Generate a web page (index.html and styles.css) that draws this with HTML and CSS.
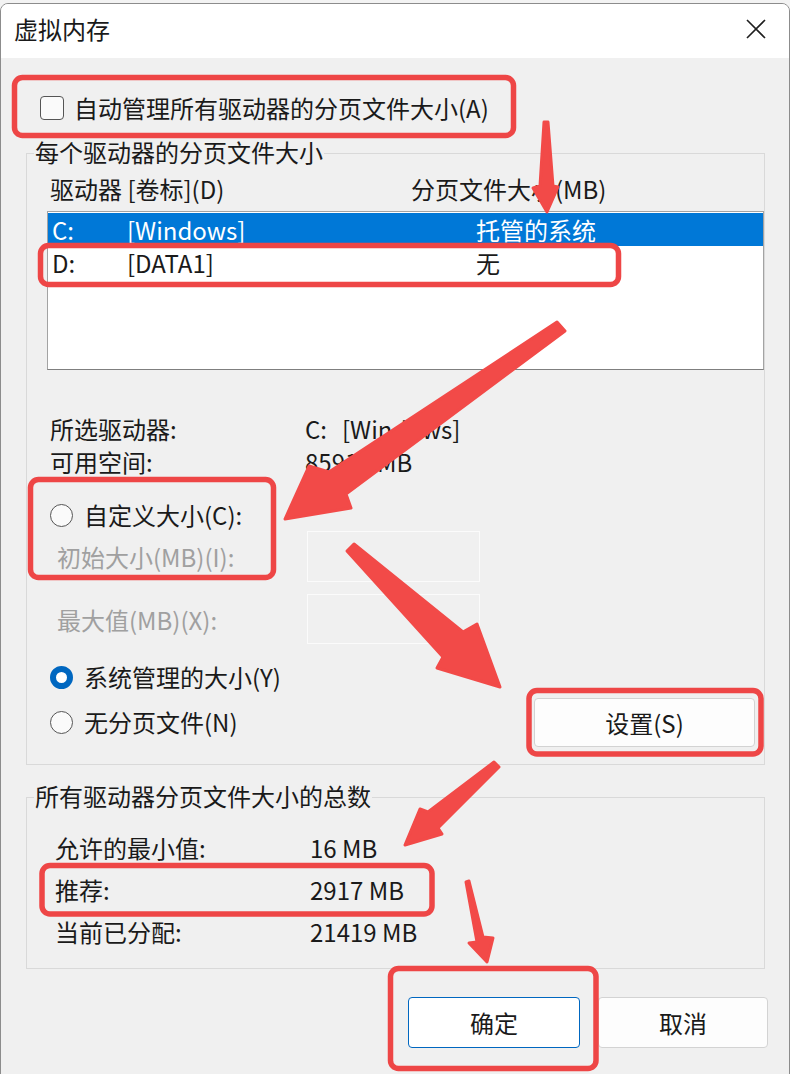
FILE: index.html
```html
<!DOCTYPE html>
<html lang="zh-CN">
<head>
    <meta charset="UTF-8">
    <meta name="viewport" content="width=device-width, initial-scale=1.0">
    <title>虚拟内存</title>
    <link rel="stylesheet" href="styles.css">
</head>
<body>
    <div class="window">
        <div class="titlebar">
            <span class="title">虚拟内存</span>
            <svg class="close" width="20" height="20" viewBox="0 0 20 20">
                <path d="M1 1 L19 19 M19 1 L1 19" stroke="#1f1f1f" stroke-width="1.6" fill="none"/>
            </svg>
        </div>

        <div class="content">
            <label class="check-row">
                <span class="checkbox"></span>
                <span>自动管理所有驱动器的分页文件大小(A)</span>
            </label>

            <!-- 每个驱动器 -->
            <div class="group group-drives">
                <div class="group-title">每个驱动器的分页文件大小</div>
                <div class="list-header">
                    <span>驱动器 [卷标](D)</span>
                    <span>分页文件大小(MB)</span>
                </div>
                <div class="listbox">
                    <div class="list-row selected">
                        <span>C:</span><span>[Windows]</span><span>托管的系统</span>
                    </div>
                    <div class="list-row">
                        <span>D:</span><span>[DATA1]</span><span>无</span>
                    </div>
                </div>

                <div class="info-rows">
                    <div class="info-row"><span>所选驱动器:</span><span><span class="drive-letter">C:</span>[Windows]</span></div>
                    <div class="info-row"><span>可用空间:</span><span>85916 MB</span></div>
                </div>

                <div class="radio-row custom-row">
                    <span class="radio"></span>
                    <span>自定义大小(C):</span>
                </div>
                <div class="size-row">
                    <span class="size-label">初始大小(MB)(I):</span>
                    <input class="size-input" type="text" disabled>
                </div>
                <div class="size-row size-max">
                    <span class="size-label">最大值(MB)(X):</span>
                    <input class="size-input" type="text" disabled>
                </div>

                <div class="radio-row system-row">
                    <span class="radio checked"></span>
                    <span>系统管理的大小(Y)</span>
                </div>
                <div class="nopage-row">
                    <div class="radio-row">
                        <span class="radio"></span>
                        <span>无分页文件(N)</span>
                    </div>
                    <button class="btn btn-set">设置(S)</button>
                </div>
            </div>

            <!-- 总数 -->
            <div class="group group-total">
                <div class="group-title">所有驱动器分页文件大小的总数</div>
                <div class="total-rows">
                    <div class="total-row"><span>允许的最小值:</span><span>16 MB</span></div>
                    <div class="total-row"><span>推荐:</span><span>2917 MB</span></div>
                    <div class="total-row"><span>当前已分配:</span><span>21419 MB</span></div>
                </div>
            </div>

            <div class="actions">
                <button class="btn btn-ok">确定</button>
                <button class="btn btn-cancel">取消</button>
            </div>
        </div>
    </div>

    <!-- red annotations -->
    <svg class="marks" width="790" height="1074" viewBox="0 0 790 1074">
        <g fill="none" stroke="#ee4646" stroke-width="5.5">
            <rect x="14.5" y="77.5" width="499" height="58" rx="8"/>
            <rect x="40.5" y="245.5" width="578" height="39" rx="8"/>
            <rect x="30.5" y="479.5" width="243" height="98" rx="8"/>
            <rect x="529" y="690.5" width="232" height="63.5" rx="8"/>
            <rect x="42" y="865.5" width="390" height="48.5" rx="8"/>
            <rect x="390.5" y="968.5" width="205.5" height="100" rx="8"/>
        </g>
        <g fill="#f24a48" stroke="#f24a48" stroke-width="3" stroke-linejoin="round">
            <polygon points="544,122 548,122 553,186 558,187 547,212 533,188 540,186"/>
            <polygon points="557,322 565,331 346,494 351,508 285,519 309,466 329,472"/>
            <polygon points="347,551 354,544 463,632 477,624 500,687 437,668 443,657"/>
            <polygon points="494,762 499,767 438,828 442,834 405,845 420,809 428,812"/>
            <polygon points="466,882 469,881 483,937 493,938 487,962 469,943 477,942"/>
        </g>
    </svg>
</body>
</html>
```

FILE: styles.css
```css
body {
    margin: 0;
    padding-top: 3px;
    position: relative;
    width: 790px;
    height: 1071px;
    overflow: hidden;
    background-color: #f3f3f3;
    font-family: "Noto Sans CJK SC", "Noto Sans", sans-serif;
    font-size: 24px;
    color: #1a1a1a;
}

.window {
    box-sizing: border-box;
    width: 790px;
    height: 1076px;
    border: 1px solid #8c8c8c;
    border-radius: 8px 8px 0 0;
    background-color: #f0f0f0;
    overflow: hidden;
}

.titlebar {
    height: 54px;
    display: flex;
    align-items: center;
    justify-content: space-between;
    padding: 0 23px 0 13px;
    background-color: #fff;
}

.title {
    line-height: 50px;
    padding-bottom: 4px;
}

.close {
    margin-bottom: 4px;
}

.content {
    padding: 34px 24px 0 25px;
}

.check-row {
    display: flex;
    align-items: center;
    gap: 10px;
    height: 32px;
    margin-left: 14px;
    line-height: 32px;
}

.checkbox {
    box-sizing: border-box;
    width: 24px;
    height: 24px;
    border: 1.5px solid #555;
    border-radius: 4px;
    background-color: #fafafa;
}

/* group boxes */
.group {
    border: 1px solid #d9d9d9;
    padding: 0 0 0 20px;
}

.group-drives {
    margin-top: 29px;
    padding-bottom: 17px;
}

.group-total {
    margin-top: 32px;
    padding-bottom: 15px;
}

.group-title {
    width: fit-content;
    margin: -18px 0 0 -13px;
    padding: 0 1px;
    line-height: 32px;
    background-color: #f0f0f0;
}

.list-header {
    display: grid;
    grid-template-columns: 361px 1fr;
    margin-top: 5px;
    padding-left: 3px;
    line-height: 32px;
}

.listbox {
    box-sizing: border-box;
    height: 159px;
    margin-top: 6px;
    padding-top: 1px;
    border: 1px solid #a3a3a3;
    border-bottom-color: #7f7f7f;
    background-color: #fff;
}

.list-row {
    display: grid;
    grid-template-columns: 75px 349px 1fr;
    padding-left: 4px;
    line-height: 33px;
}

.list-row.selected {
    background-color: #0078d7;
    color: #fff;
}

.info-rows {
    margin-top: 42px;
}

.info-row {
    display: grid;
    grid-template-columns: 255px 1fr;
    padding-left: 3px;
    line-height: 33px;
}

.drive-letter {
    margin-right: 15px;
}

.radio-row {
    display: flex;
    align-items: center;
    gap: 11px;
    height: 32px;
    padding-left: 3px;
    line-height: 32px;
}

.custom-row {
    margin-top: 21px;
}

.system-row {
    margin-top: 17px;
}

.radio {
    box-sizing: border-box;
    width: 23px;
    height: 23px;
    border: 1.5px solid #555;
    border-radius: 50%;
    background-color: #fafafa;
}

.radio.checked {
    border: 6.5px solid #0067c0;
    background-color: #fff;
}

.size-row {
    display: flex;
    align-items: center;
    height: 51px;
    padding-left: 10px;
}

.size-max {
    height: 50px;
    margin-top: 12px;
}

.size-label {
    width: 250px;
    color: #a0a0a0;
}

.size-input {
    box-sizing: border-box;
    width: 173px;
    height: 100%;
    border: 1px solid #fbfbfb;
    background-color: #f0f0f0;
}

.nopage-row {
    display: flex;
    align-items: center;
    justify-content: space-between;
    height: 50px;
    margin-top: 4px;
}

.btn {
    box-sizing: border-box;
    font-family: inherit;
    font-size: 24px;
    color: #1a1a1a;
    background-color: #fdfdfd;
    border: 1px solid #d3d3d3;
    border-radius: 4px;
    padding: 0;
}

.btn-set {
    width: 221px;
    height: 49px;
    margin-right: 9px;
}

.total-rows {
    margin-top: 15px;
}

.total-row {
    display: grid;
    grid-template-columns: 255px 1fr;
    padding-left: 8px;
    line-height: 42px;
}

.actions {
    display: flex;
    justify-content: flex-end;
    gap: 18px;
    margin: 28px -3px 0 0;
}

.btn-ok,
.btn-cancel {
    height: 51px;
}

.btn-ok {
    width: 172px;
    border-color: #0067c0;
    background-color: #fff;
}

.btn-cancel {
    width: 170px;
}

.marks {
    position: absolute;
    top: 0;
    left: 0;
    pointer-events: none;
}
```
